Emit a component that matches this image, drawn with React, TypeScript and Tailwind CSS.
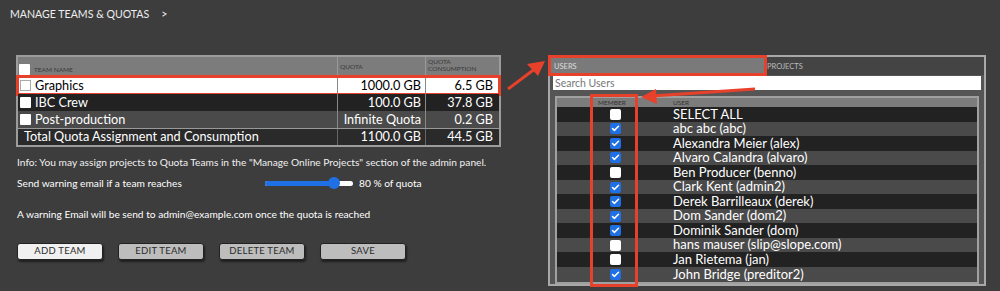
import { Check } from 'lucide-react';

const teams = [
  { name: 'Graphics', quota: '1000.0 GB', used: '6.5 GB', bg: 'bg-white text-black', selected: true },
  { name: 'IBC Crew', quota: '100.0 GB', used: '37.8 GB', bg: 'bg-[#222222] text-white', selected: false },
  { name: 'Post-production', quota: 'Infinite Quota', used: '0.2 GB', bg: 'bg-[#4a4a4a] text-white', selected: false },
];

const users = [
  { name: 'SELECT ALL', on: false },
  { name: 'abc abc (abc)', on: true },
  { name: 'Alexandra Meier (alex)', on: true },
  { name: 'Alvaro Calandra (alvaro)', on: true },
  { name: 'Ben Producer (benno)', on: false },
  { name: 'Clark Kent (admin2)', on: true },
  { name: 'Derek Barrilleaux (derek)', on: true },
  { name: 'Dom Sander (dom2)', on: true },
  { name: 'Dominik Sander (dom)', on: true },
  { name: 'hans mauser (slip@slope.com)', on: false },
  { name: 'Jan Rietema (jan)', on: false },
  { name: 'John Bridge (preditor2)', on: true },
];

const Box = () => <span className="inline-block h-[11px] w-[11px] shrink-0 rounded-[1px] bg-white" />;

const MemberBox = ({ on }: { on: boolean }) =>
  on ? (
    <span className="flex h-[11px] w-[11px] items-center justify-center rounded-[2px] bg-[#1f6fe5]">
      <Check className="h-[9px] w-[9px] text-white" strokeWidth={4} />
    </span>
  ) : (
    <span className="h-[11px] w-[11px] rounded-[2px] bg-white" />
  );

const Button = ({ label, light }: { label: string; light?: boolean }) => (
  <button
    className={`h-[17px] w-[86px] rounded-[3px] border border-[#222] text-[9.5px] tracking-wide text-[#2a2a2a] shadow-[1px_2px_2px_rgba(0,0,0,0.5)] ${
      light ? 'bg-[#f0f0f0]' : 'bg-[#bdbdbd]'
    }`}
  >
    {label}
  </button>
);

export default function App() {
  return (
    <div className="relative h-[291px] w-[1000px] overflow-hidden bg-[#3d3d3d] text-white" style={{ fontFamily: 'Lato, "Liberation Sans", sans-serif' }}>
      <div className="flex h-[20px] gap-[12px] pl-[10px] pt-[7px] text-[10.6px] leading-[14px] text-[#eee]">
        <span>MANAGE TEAMS &amp; QUOTAS</span>
        <span>&gt;</span>
      </div>

      <div className="flex pt-[35px]">
        {/* left side */}
        <div className="w-[548px] pl-[16px]">
          <div className="w-[485px] border-2 border-[#9c9c9c] bg-[#2a2a2a]">
            <div className="flex h-[20px] bg-[#7c7c7c] text-[6.5px] text-[#3a3a3a]">
              <div className="flex w-[319px] items-end gap-[4px] pb-[2px] pl-[1px]">
                <Box />
                <span>TEAM NAME</span>
              </div>
              <div className="w-[88px] border-l border-[#999] pl-[2px] pt-[5px]">QUOTA</div>
              <div className="flex-1 border-l border-[#999] pl-[2px] leading-[7px] pt-[1px]">
                QUOTA
                <br />
                CONSUMPTION
              </div>
            </div>
            {teams.map((t) => (
              <div key={t.name} className={`relative flex h-[17px] items-center text-[12.7px] ${t.bg}`}>
                <div className="flex w-[319px] items-center gap-[4px] pl-[2px]">
                  {t.selected ? <span className="h-[11px] w-[11px] border border-[#aaa]" /> : <Box />}
                  <span>{t.name}</span>
                </div>
                <div className="flex h-full w-[88px] items-center justify-end border-l border-[#888] pr-[4px]">{t.quota}</div>
                <div className="flex h-full flex-1 items-center justify-end border-l border-[#888] pr-[6px]">{t.used}</div>
                {t.selected && <div className="absolute -inset-x-[2px] -inset-y-[2px] border-[3px] border-[#e8412b]" />}
              </div>
            ))}
            <div className="flex h-[17px] items-center border-t border-[#999] bg-[#2a2a2a] text-[12.7px]">
              <div className="w-[319px] pl-[6px]">Total Quota Assignment and Consumption</div>
              <div className="flex h-full w-[88px] items-center justify-end border-l border-[#666] pr-[4px]">1100.0 GB</div>
              <div className="flex h-full flex-1 items-center justify-end border-l border-[#666] pr-[6px]">44.5 GB</div>
            </div>
          </div>

          <div className="pl-[1px] pt-[8px] text-[10.2px] text-[#f0f0f0]">
            Info: You may assign projects to Quota Teams in the "Manage Online Projects" section of the admin panel.
          </div>
          <div className="flex items-center pl-[1px] pt-[6px] text-[10.2px]">
            <span className="w-[248px]">Send warning email if a team reaches</span>
            <div className="relative flex h-[5px] w-[88px] overflow-visible rounded-full bg-white">
              <div className="h-full w-[70px] rounded-full bg-[#1f6fe5]" />
              <span className="absolute left-[63px] top-[-4px] h-[12px] w-[12px] rounded-full bg-[#1f6fe5]" />
            </div>
            <span className="pl-[6px]">80 % of quota</span>
          </div>
          <div className="pl-[1px] pt-[15px] text-[10.2px]">A warning Email will be send to admin@example.com once the quota is reached</div>

          <div className="flex gap-[15px] pl-[1px] pt-[21px]">
            <Button label="ADD TEAM" light />
            <Button label="EDIT TEAM" />
            <Button label="DELETE TEAM" />
            <Button label="SAVE" />
          </div>
        </div>

        {/* right panel */}
        <div className="w-[438px] border-2 border-[#a8a8a8] bg-[#555]">
          <div className="flex h-[18px] bg-[#444] text-[7.5px] text-[#ddd]">
            <div className="relative w-[215px] bg-[#7a7a7a] pl-[4px] pt-[4px]">
              USERS
              <div className="absolute -left-[2px] -right-[2px] -top-[2px] -bottom-[1px] border-[3px] border-[#e8412b]" />
            </div>
            <div className="pl-[2px] pt-[4px] text-[#bbb]">PROJECTS</div>
          </div>
          <div className="px-[3px] pt-[1px]">
            <div className="h-[14px] bg-white pl-[2px] text-[10.5px] leading-[14px] text-[#777]">Search Users</div>
          </div>
          <div className="mx-[5px] mt-[6px] border-2 border-[#a0a0a0] bg-[#222]">
            <div className="flex h-[9px] bg-[#7c7c7c] text-[6.5px] leading-[9px] text-[#333]">
              <span className="w-[84px] pl-[41px]">MEMBER</span>
              <span className="pl-[32px]">USER</span>
            </div>
            {users.map((u, i) => (
              <div key={u.name} className={`flex h-[14.55px] items-center text-[13px] ${i % 2 === 0 ? 'bg-[#222]' : 'bg-[#4a4a4a]'}`}>
                <div className="flex w-[116px] justify-center pl-[1px]">
                  <MemberBox on={u.on} />
                </div>
                <span>{u.name}</span>
              </div>
            ))}
          </div>
        </div>
      </div>

      {/* member column highlight */}
      <div className="absolute left-[590px] top-[94px] h-[193px] w-[48px] border-[3px] border-[#e8412b]" />

      {/* arrows */}
      <svg className="absolute left-0 top-0" width="1000" height="291">
        <line x1="508" y1="89" x2="536" y2="68" stroke="#e8412b" strokeWidth="3" />
        <polygon points="545,61 527,64 538,76" fill="#e8412b" />
        <line x1="755" y1="89" x2="652" y2="96" stroke="#e8412b" strokeWidth="3" />
        <polygon points="641,97 656,89 657,104" fill="#e8412b" />
      </svg>
    </div>
  );
}
